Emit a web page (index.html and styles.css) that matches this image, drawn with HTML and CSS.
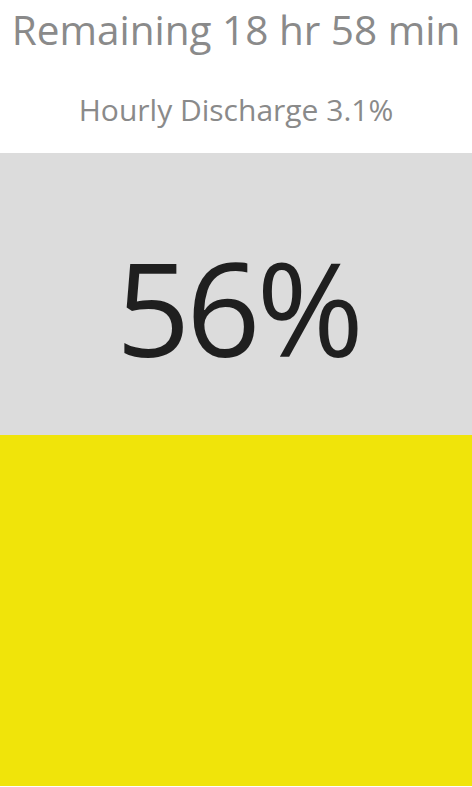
FILE: index.html
```html
<!DOCTYPE html>
<html>
<head>
<meta charset="utf-8">
<link rel="stylesheet" href="styles.css">
</head>
<body>
<div class="page">
  <header class="info">
    <div class="remaining">Remaining 18 hr 58 min</div>
    <div class="hourly">Hourly Discharge 3.1%</div>
  </header>
  <section class="battery">
    <div class="empty"><span class="percent">56%</span></div>
    <div class="fill"></div>
  </section>
</div>
</body>
</html>
```
FILE: styles.css
```css
html, body {
  margin: 0;
  padding: 0;
  background: #ffffff;
}
.page {
  width: 472px;
  height: 787px;
  display: flex;
  flex-direction: column;
  font-family: "Open Sans", "Noto Sans", sans-serif;
}
.info {
  height: 153px;
  display: flex;
  flex-direction: column;
  align-items: center;
  color: #8a8a8a;
}
.remaining {
  font-size: 40.5px;
  line-height: 1;
  margin-top: 10px;
  white-space: nowrap;
}
.hourly {
  font-size: 30px;
  line-height: 1;
  margin-top: 44px;
  white-space: nowrap;
}
.battery {
  flex: 1;
  display: flex;
  flex-direction: column;
}
.empty {
  height: 282px;
  box-sizing: border-box;
  padding-top: 89px;
  background: #dcdcdc;
  display: flex;
  justify-content: center;
  align-items: flex-start;
}
.percent {
  font-size: 130px;
  line-height: 1;
  letter-spacing: -4px;
  margin-right: -4px;
  color: #1f1f1f;
}
.fill {
  height: 351px;
  background: #f0e40a;
}
```
